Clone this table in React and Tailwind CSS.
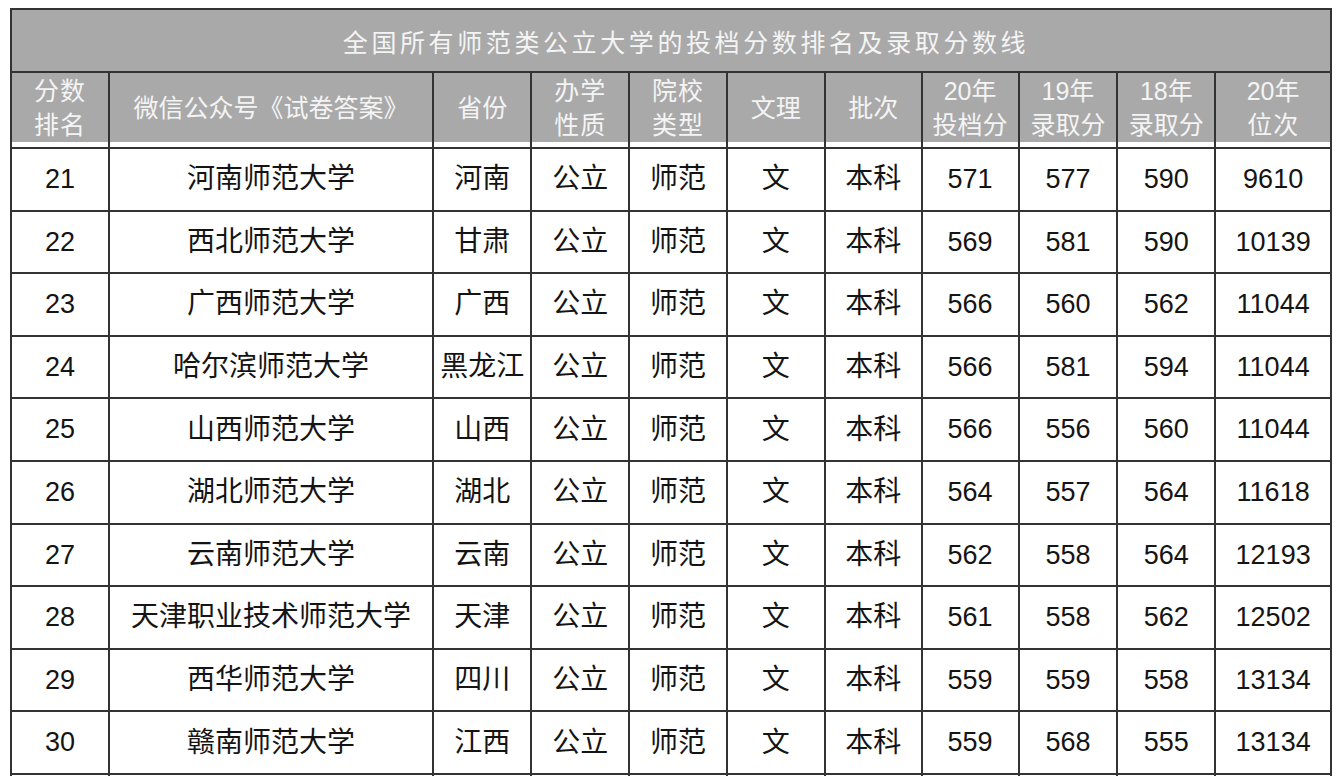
import React from 'react'

const cols = [
  'w-[98px]', 'w-[325px]', 'w-[98px]', 'w-[98px]', 'w-[98px]', 'w-[98px]',
  'w-[97px]', 'w-[97px]', 'w-[99px]', 'w-[98px]', 'w-[116px]'
]

const headers = [
  ['分数', '排名'],
  ['微信公众号《试卷答案》'],
  ['省份'],
  ['办学', '性质'],
  ['院校', '类型'],
  ['文理'],
  ['批次'],
  ['20年', '投档分'],
  ['19年', '录取分'],
  ['18年', '录取分'],
  ['20年', '位次']
]

const rows = [
  ['21', '河南师范大学', '河南', '571', '577', '590', '9610'],
  ['22', '西北师范大学', '甘肃', '569', '581', '590', '10139'],
  ['23', '广西师范大学', '广西', '566', '560', '562', '11044'],
  ['24', '哈尔滨师范大学', '黑龙江', '566', '581', '594', '11044'],
  ['25', '山西师范大学', '山西', '566', '556', '560', '11044'],
  ['26', '湖北师范大学', '湖北', '564', '557', '564', '11618'],
  ['27', '云南师范大学', '云南', '562', '558', '564', '12193'],
  ['28', '天津职业技术师范大学', '天津', '561', '558', '562', '12502'],
  ['29', '西华师范大学', '四川', '559', '559', '558', '13134'],
  ['30', '赣南师范大学', '江西', '559', '568', '555', '13134']
]

const font = { fontFamily: '"Liberation Sans", "Noto Sans CJK SC", sans-serif' }

export default function App() {
  return (
    <div className="min-h-screen bg-white pt-[8px] pl-[10px]" style={font}>
      <div className="w-[1322px] border-l-2 border-t-2 border-[#333]">
        <div className="h-[63px] bg-[#a9a9a9] border-r-2 border-b-2 border-[#333] flex items-center justify-center pl-[30px] pt-[6px] text-[25px] tracking-[3.6px] text-[#f4f4f4]">
          全国所有师范类公立大学的投档分数排名及录取分数线
        </div>
        <div className="flex">
          {headers.map((h, i) => (
            <div key={i} className={`${cols[i]} h-[76px] border-r-2 border-b-2 border-[#333] flex flex-col`}>
              <div className="h-[69px] bg-[#a9a9a9] flex flex-col items-center justify-center text-[25px] leading-[34px] text-[#f4f4f4]">
                {h.map((t, j) => (
                  <div key={j} className={h.length > 1 && t.length === 2 ? 'tracking-[1px]' : ''}>{t}</div>
                ))}
              </div>
            </div>
          ))}
        </div>
        {rows.map((r) => {
          const cells = [r[0], r[1], r[2], '公立', '师范', '文', '本科', r[3], r[4], r[5], r[6]]
          return (
            <div key={r[0]} className="flex">
              {cells.map((c, i) => (
                <div
                  key={i}
                  className={`${cols[i]} h-[62.6px] border-r-2 border-b-2 border-[#333] flex items-center justify-center text-[#141414] ${/\d/.test(c) ? 'text-[27px]' : 'text-[28px]'}`}
                >
                  {c}
                </div>
              ))}
            </div>
          )
        })}
        <div className="flex">
          {cols.map((w, i) => (
            <div key={i} className={`${w} h-[40px] border-r-2 border-[#333]`} />
          ))}
        </div>
      </div>
    </div>
  )
}
